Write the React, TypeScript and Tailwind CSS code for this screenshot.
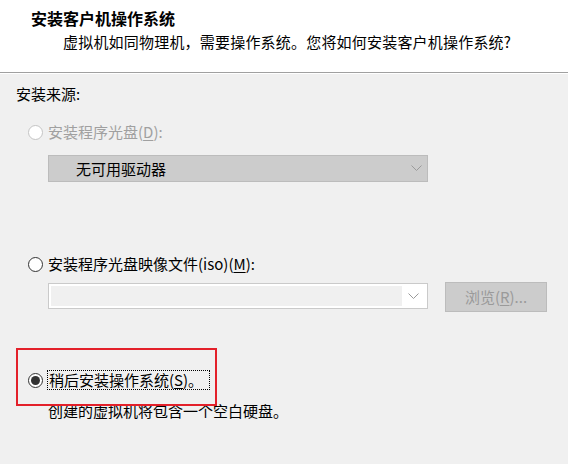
const font = { fontFamily: '"Noto Sans CJK SC", "Noto Sans", sans-serif' };

function Chevron({ color }: { color: string }) {
  return (
    <svg width="11" height="7" viewBox="0 0 11 7" fill="none">
      <polyline points="0.5,0.5 5.5,5.5 10.5,0.5" stroke={color} strokeWidth="1" />
    </svg>
  );
}

function Radio({ state }: { state: "disabled" | "off" | "on" }) {
  const border = state === "disabled" ? "border-[#c4c4c4]" : "border-[#333333]";
  return (
    <span
      className={`flex h-[15px] w-[15px] shrink-0 items-center justify-center rounded-full border bg-white ${border}`}
    >
      {state === "on" && <span className="h-[9px] w-[9px] rounded-full bg-[#333333]" />}
    </span>
  );
}

export default function App() {
  return (
    <div
      className="relative h-[464px] w-[568px] overflow-hidden bg-[#f0f0f0] text-[15px] leading-[20px] text-black"
      style={font}
    >
      {/* Header */}
      <div className="h-[73px] border-b border-[#a0a0a0] bg-white pl-[31px] pt-[8px]">
        <div className="text-[16px] font-bold">安装客户机操作系统</div>
        <div className="mt-[4px] pl-[32px] tracking-[0.2px]">
          虚拟机如同物理机，需要操作系统。您将如何安装客户机操作系统?
        </div>
      </div>
      <div className="h-px bg-white" />

      {/* Body */}
      <div className="px-[16px] pt-[10px]">
        <div>安装来源:</div>

        <div className="mt-[18px] flex items-center gap-[5px] pl-[12px] text-[#a0a0a0]">
          <Radio state="disabled" />
          <span>
            安装程序光盘(<span className="underline underline-offset-2">D</span>):
          </span>
        </div>

        <div className="ml-[32px] mt-[13px] flex h-[27px] w-[380px] items-center justify-between border border-[#bcbcbc] bg-[#cccccc] pl-[27px] pr-[5px]">
          <span>无可用驱动器</span>
          <Chevron color="#9a9a9a" />
        </div>

        <div className="mt-[72px] flex items-center gap-[5px] pl-[12px]">
          <Radio state="off" />
          <span>
            安装程序光盘映像文件(iso)(<span className="underline underline-offset-2">M</span>):
          </span>
        </div>

        <div className="ml-[32px] mt-[8px] flex items-start gap-[17px]">
          <div className="mt-[1px] flex h-[26px] w-[380px] items-center border border-[#cacaca] bg-white p-[2px]">
            <div className="h-full flex-1 bg-[#f0f0f0]" />
            <div className="flex w-[23px] justify-center">
              <Chevron color="#9a9a9a" />
            </div>
          </div>
          <div className="flex h-[30px] w-[102px] items-center justify-center border border-[#bcbcbc] bg-[#cccccc] text-[#9a9a9a]">
            浏览(<span className="underline underline-offset-2">R</span>)...
          </div>
        </div>

        <div className="mt-[58px] flex items-center gap-[4px] pl-[12px]">
          <Radio state="on" />
          <span className="border border-dotted border-black pl-[1px] pr-[6px] leading-[18px]">
            稍后安装操作系统(<span className="underline underline-offset-2">S</span>)。
          </span>
        </div>

        <div className="mt-[11px] pl-[32px]">创建的虚拟机将包含一个空白硬盘。</div>
      </div>

      {/* annotation */}
      <div className="absolute left-[16px] top-[348px] h-[58px] w-[201px] border-2 border-[#e3202a]" />
    </div>
  );
}
